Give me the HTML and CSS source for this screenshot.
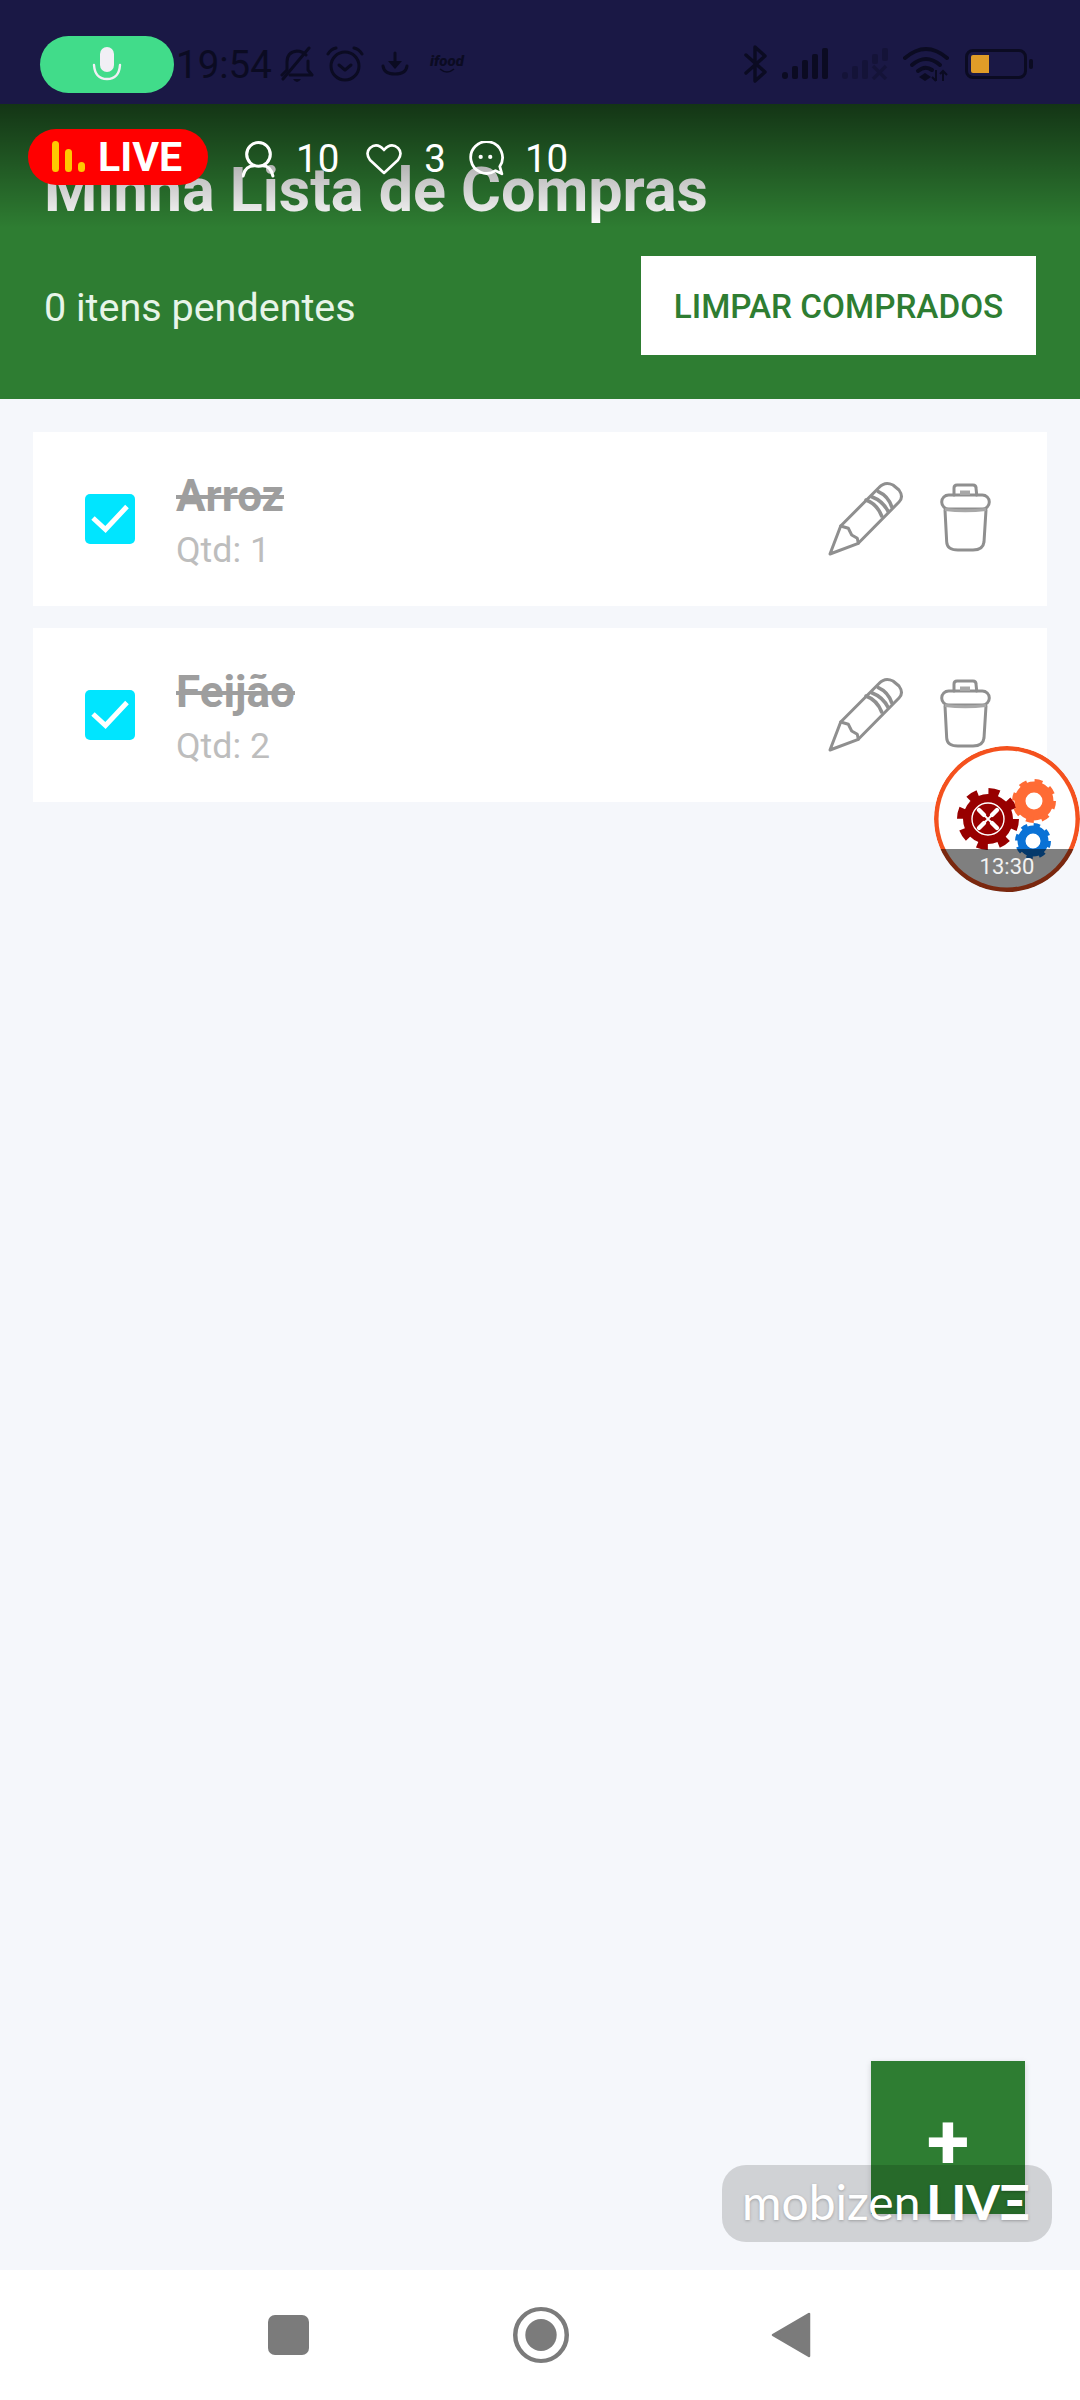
FILE: index.html
```html
<!DOCTYPE html>
<html lang="pt-BR">
<head>
<meta charset="utf-8">
<title>Minha Lista de Compras</title>
<link rel="stylesheet" href="styles.css">
</head>
<body>
<svg class="defs" width="0" height="0" aria-hidden="true">
  <defs>
    <symbol id="pencil" viewBox="0 0 80 80">
      <g fill="none" stroke="#8f8f8f" stroke-width="3" stroke-linecap="round" stroke-linejoin="round">
        <path d="M5 76 L15.7 48 L54 9.5 Q60 3 68 7 L74 12 Q79 19 74 24 L33.3 65.3 Z"/>
        <path d="M15.7 48 L23.3 50.3 L26.7 57 L32.3 60.3 L33.3 65.3"/>
        <path d="M41 22 Q52 26 56.7 38" stroke-width="3.6"/>
        <path d="M46.7 18.7 Q58 23 63.3 33.7" stroke-width="3.6"/>
        <path d="M53.3 13.7 Q63 18 66.7 28.7" stroke-width="3.6"/>
      </g>
    </symbol>
    <symbol id="trash" viewBox="0 0 56 76">
      <g fill="none" stroke="#8f8f8f" stroke-width="3" stroke-linecap="round" stroke-linejoin="round">
        <path d="M16 15 V8 Q16 5 19 5 H35 Q38 5 38 8 L38.7 15"/>
        <rect x="3.7" y="15" width="47.6" height="14" rx="7"/>
        <path d="M7 30 L8.7 62 Q9 70 20 70 H35 Q45 70 46 62 L48 30"/>
      </g>
      <rect x="22" y="10.5" width="10" height="4.5" fill="#a8a8a8"/>
      <path d="M7 29.5 Q27 32 48 29.5" fill="none" stroke="#a8a8a8" stroke-width="3"/>
    </symbol>
    <symbol id="check" viewBox="0 0 50 50">
      <path d="M8 24 L20.5 35.5 L42 12.5" fill="none" stroke="#fff" stroke-width="5"/>
    </symbol>
  </defs>
</svg>

<div class="screen">
  <div class="status">
    <div class="mic">
      <svg class="mic-icon" viewBox="0 0 30 36" width="30" height="36">
        <rect x="8" y="1" width="14" height="25" rx="7" fill="#f1eff5"/>
        <path d="M2 19 Q3 33 15 33 Q27 33 28 19" fill="none" stroke="#f1eff5" stroke-width="2.4" stroke-linecap="round"/>
      </svg>
    </div>
    <span class="clock">19:54</span>
    <svg class="st st-bell" viewBox="0 0 34 36" width="34" height="36">
      <g fill="none" stroke="#0b0b22" stroke-width="3" stroke-linecap="round" stroke-linejoin="round">
        <path d="M2 29 L7 24 V16 Q7 6 17 5 Q22 5 26 9"/>
        <path d="M28 15 V24 L32 29 H10"/>
        <path d="M3 33 L29 2"/>
      </g>
      <path d="M13 33 H21 Q19 36 17 36 Q15 36 13 33Z" fill="#0b0b22"/>
    </svg>
    <svg class="st st-alarm" viewBox="0 0 38 36" width="38" height="36">
      <g fill="none" stroke="#0b0b22" stroke-width="3" stroke-linecap="round" stroke-linejoin="round">
        <circle cx="19" cy="20" r="14"/>
        <path d="M13 19 L19 24 L25 19"/>
        <path d="M2 8 Q5 3 10 2"/>
        <path d="M36 8 Q33 3 28 2"/>
      </g>
    </svg>
    <svg class="st st-dl" viewBox="0 0 28 26" width="28" height="26">
      <g fill="none" stroke="#0b0b22" stroke-width="3" stroke-linecap="round" stroke-linejoin="round">
        <path d="M14 2 V15"/>
        <path d="M2 15 Q3 23 14 23 Q25 23 26 15"/>
      </g>
      <path d="M7 10 H21 L14 18Z" fill="#0b0b22"/>
    </svg>
    <div class="ifood">
      <span class="ifood-word">ifood</span>
      <svg class="ifood-smile" viewBox="0 0 16 6" width="16" height="6">
        <path d="M1 1 Q8 7 15 1" fill="none" stroke="#0b0b22" stroke-width="1.6"/>
      </svg>
    </div>
    <div class="status-right">
      <svg class="st-bt" viewBox="0 0 26 40" width="26" height="40">
        <path d="M3 11 L22 28 L12 37 V3 L22 12 L3 29" fill="none" stroke="#0b0b22" stroke-width="3.4" stroke-linejoin="round" stroke-linecap="round"/>
      </svg>
      <svg class="st-sig" viewBox="0 0 46 32" width="46" height="32">
        <g fill="#0b0b22">
          <rect x="0" y="24" width="6" height="7" rx="3"/>
          <rect x="10" y="18" width="6" height="13" rx="2"/>
          <rect x="20" y="12" width="6" height="19" rx="2"/>
          <rect x="30" y="6" width="6" height="25" rx="2"/>
          <rect x="40" y="0" width="6" height="31" rx="2"/>
        </g>
      </svg>
      <svg class="st-sig2" viewBox="0 0 46 32" width="46" height="32">
        <g fill="#0b0b22" opacity="0.35">
          <rect x="0" y="24" width="6" height="7" rx="3"/>
          <rect x="10" y="18" width="6" height="13" rx="2"/>
          <rect x="20" y="12" width="6" height="19" rx="2"/>
          <rect x="30" y="6" width="6" height="10" rx="2"/>
          <rect x="40" y="0" width="6" height="13" rx="2"/>
          <path d="M31 18 L44 31 M44 18 L31 31" stroke="#0b0b22" stroke-width="3.4" fill="none"/>
        </g>
      </svg>
      <svg class="st-wifi" viewBox="0 0 46 36" width="46" height="36">
        <g fill="none" stroke="#0b0b22" stroke-width="4" stroke-linecap="round">
          <path d="M2 12 Q23 -6 44 12"/>
          <path d="M9 19 Q23 7 37 19"/>
          <path d="M15 25 Q22 19 29 24"/>
        </g>
        <path d="M16 31 L22 27 L28 31 L22 35Z" fill="#0b0b22"/>
        <path d="M33 24 V35 M40 25 V35 M29 31 L33 35 M37 28 L40 25 L44 29" fill="none" stroke="#0b0b22" stroke-width="2"/>
      </svg>
      <div class="battery"><div class="battery-fill"></div></div>
      <div class="battery-nub"></div>
    </div>
  </div>

  <header class="header">
    <h1 class="title">Minha Lista de Compras</h1>
    <div class="header-row">
      <span class="pending">0 itens pendentes</span>
      <button class="clear">LIMPAR COMPRADOS</button>
    </div>
  </header>

  <main class="list">
    <div class="card">
      <div class="checkbox"><svg width="50" height="50"><use href="#check"/></svg></div>
      <div class="card-text">
        <div class="name">Arroz</div>
        <div class="qty">Qtd: 1</div>
      </div>
      <svg class="act-pencil" width="80" height="80"><use href="#pencil"/></svg>
      <svg class="act-trash" width="56" height="76"><use href="#trash"/></svg>
    </div>
    <div class="card">
      <div class="checkbox"><svg width="50" height="50"><use href="#check"/></svg></div>
      <div class="card-text">
        <div class="name">Feijão</div>
        <div class="qty">Qtd: 2</div>
      </div>
      <svg class="act-pencil" width="80" height="80"><use href="#pencil"/></svg>
      <svg class="act-trash" width="56" height="76"><use href="#trash"/></svg>
    </div>
  </main>

  <nav class="nav">
    <div class="nav-square"></div>
    <svg class="nav-home" viewBox="0 0 50 56" width="50" height="56" preserveAspectRatio="none">
      <ellipse cx="25" cy="28" rx="23" ry="26" fill="none" stroke="#7b7b7b" stroke-width="4"/>
      <ellipse cx="25" cy="28" rx="14" ry="16" fill="#7b7b7b"/>
    </svg>
    <svg class="nav-back" viewBox="0 0 40 46" width="40" height="46">
      <path d="M38 2 V44 L2 23Z" fill="#7b7b7b" stroke="#7b7b7b" stroke-width="2.5" stroke-linejoin="round"/>
    </svg>
  </nav>

  <div class="fade"></div>

  <div class="live-bar">
    <div class="live-pill">
      <svg viewBox="0 0 34 32" width="34" height="32">
        <rect x="0" y="0" width="7" height="31" rx="3.5" fill="#ffc800"/>
        <rect x="13" y="8" width="7" height="23" rx="3.5" fill="#ffc800"/>
        <rect x="26" y="21" width="7" height="10" rx="3.5" fill="#ffc800"/>
      </svg>
      <span class="live-word">LIVE</span>
    </div>
    <svg class="ls ls-user" viewBox="0 0 32 36" width="33" height="37">
      <g fill="none" stroke="#fff" stroke-width="3" stroke-linecap="round">
        <circle cx="16" cy="13" r="11.5"/>
        <path d="M1 34 Q3 24 12 24 M20 24 Q28 24 30 34"/>
      </g>
    </svg>
    <span class="ls-num ls-n1">10</span>
    <svg class="ls ls-heart" viewBox="0 0 36 32" width="36" height="32">
      <path d="M18 30 L4 17 Q-1 10 4 5 Q11 -1 18 7 Q25 -1 32 5 Q37 10 32 17Z" fill="none" stroke="#fff" stroke-width="2.6" stroke-linejoin="round"/>
    </svg>
    <span class="ls-num ls-n2">3</span>
    <svg class="ls ls-chat" viewBox="0 0 34 34" width="36" height="36">
      <path d="M26 28 A15 15 0 1 1 30 24 L32 31 Z" fill="none" stroke="#fff" stroke-width="2.6" stroke-linejoin="round"/>
      <circle cx="12" cy="15" r="2" fill="#fff"/>
      <circle cx="21" cy="15" r="2" fill="#fff"/>
    </svg>
    <span class="ls-num ls-n3">10</span>
  </div>

  <div class="bubble">
    <svg class="bubble-art" viewBox="0 0 146 146" width="146" height="146">
      <circle cx="73" cy="73" r="73" fill="#f4511e"/>
      <circle cx="73" cy="73" r="68.5" fill="#fff"/>
      <circle cx="54" cy="73" r="25" fill="#980000"/>
      <circle cx="54" cy="73" r="27" fill="none" stroke="#980000" stroke-width="8" stroke-dasharray="10.6 10.6"/>
      <circle cx="54" cy="73" r="16" fill="none" stroke="#fff" stroke-width="1.4"/>
      <path d="M45 64 L50 69 M63 64 L58 69 M50 77 L45 82 M58 77 L63 82" stroke="#fff" stroke-width="4.4" stroke-linecap="round"/>
      <path d="M50 69 L58 77 M58 69 L50 77" stroke="#fff" stroke-width="1.8"/>
      <circle cx="100" cy="55" r="14" fill="none" stroke="#ff6b35" stroke-width="11"/>
      <circle cx="100" cy="55" r="19" fill="none" stroke="#ff6b35" stroke-width="6" stroke-dasharray="7.46 7.46"/>
      <circle cx="99" cy="95" r="11.5" fill="none" stroke="#0a72d6" stroke-width="8"/>
      <circle cx="99" cy="95" r="15.5" fill="none" stroke="#0a72d6" stroke-width="5" stroke-dasharray="6.1 6.1"/>
    </svg>
    <div class="bubble-time">13:30</div>
  </div>

  <button class="fab">+</button>
  <div class="brand">
    <span class="brand-a">mobizen</span>
    <span class="brand-b">LIVΞ</span>
  </div>
</div>
</body>
</html>
```

FILE: styles.css
```css
* { box-sizing: border-box; }
html, body { margin: 0; padding: 0; }
body { font-family: Roboto, "Liberation Sans", sans-serif; background: #f5f7fb; }
.defs { position: absolute; }
.screen { position: relative; width: 1080px; height: 2400px; overflow: hidden; display: flex; flex-direction: column; }

.status { height: 104px; flex: none; background: #1a1845; padding: 24px 0 0 40px; display: flex; align-items: center; }
.mic { width: 134px; height: 57px; border-radius: 29px; background: #41dc8a; display: flex; align-items: center; justify-content: center; flex: none; }
.clock { font-size: 38.5px; color: #0b0b22; margin-left: 2px; width: 92px; flex: none; }
.st { flex: none; }
.st-bell { margin-left: 12px; }
.st-alarm { margin-left: 12px; }
.st-dl { margin-left: 17px; }
.ifood { margin-left: 21px; width: 34px; flex: none; display: flex; flex-direction: column; align-items: center; }
.ifood-word { font-size: 15px; line-height: 14px; font-weight: 900; font-style: italic; color: #0b0b22; }
.ifood-smile { display: block; }
.status-right { margin-left: auto; display: flex; align-items: center; padding-right: 47px; }
.st-sig { margin-left: 13px; }
.st-sig2 { margin-left: 14px; }
.st-wifi { margin-left: 15px; }
.battery { margin-left: 16px; width: 62px; height: 30px; border: 3.5px solid #0b0b22; border-radius: 8px; padding: 3px; }
.battery-fill { width: 18px; height: 100%; background: #e09c28; border-radius: 2px 0 0 2px; }
.battery-nub { width: 4px; height: 10px; margin-left: 2px; background: #0b0b22; border-radius: 2px; }

.header { height: 295px; flex: none; background: #2e7d32; padding: 53px 44px 44px; display: flex; flex-direction: column; justify-content: space-between; }
.title { margin: 0; font-size: 61px; line-height: 66px; font-weight: 700; color: #fff; }
.header-row { display: flex; align-items: center; justify-content: space-between; }
.pending { font-size: 39.5px; color: #e8f5e9; padding-top: 3px; }
.clear { width: 395px; height: 99px; border: 0; border-radius: 0; padding: 2px 0 0; background: #fff; color: #2e7d32; font: 500 33.3px Roboto, sans-serif; }

.list { flex: 1; padding: 33px 33px 0; display: flex; flex-direction: column; gap: 22px; background: #f5f7fb; }
.card { height: 174px; background: #fff; padding: 0 53px 0 52px; display: flex; align-items: center; }
.checkbox { width: 50px; height: 50px; background: #00e5ff; border-radius: 5px; flex: none; }
.checkbox svg { display: block; }
.card-text { flex: 1; margin-left: 41px; padding-top: 4px; }
.name { font-size: 44px; line-height: 48px; font-weight: 700; color: #9e9e9e; text-decoration: line-through; }
.qty { font-size: 35.75px; line-height: 40px; margin-top: 10px; color: #bdbdbd; }
.act-pencil { flex: none; margin-top: -2px; }
.act-trash { flex: none; margin: -2px 0 0 33px; }

.nav { height: 130px; flex: none; background: #fff; display: flex; align-items: center; padding-left: 268px; }
.nav-square { width: 41px; height: 40px; background: #7b7b7b; border-radius: 7px; }
.nav-home { margin-left: 204px; width: 56px; }
.nav-back { margin-left: 202px; }

.fade { position: absolute; left: 0; top: 104px; width: 1080px; height: 124px; background: linear-gradient(rgba(0,0,0,.58), rgba(0,0,0,0)); }

.live-bar { position: absolute; left: 28px; top: 129px; height: 56px; display: flex; align-items: center; }
.live-pill { width: 180px; height: 56px; border-radius: 28px; background: #f00; display: flex; align-items: center; padding-left: 24px; flex: none; }
.live-word { margin-left: 12px; font-size: 41px; font-weight: 700; color: #fff; line-height: 1; }
.ls { flex: none; margin-top: 4px; }
.ls-user { margin-left: 34px; }
.ls-num { font-size: 38.5px; color: #fff; margin-top: 2px; flex: none; }
.ls-n1 { margin-left: 21px; }
.ls-heart { margin-left: 27px; }
.ls-n2 { margin-left: 22px; }
.ls-chat { margin-left: 22px; }
.ls-n3 { margin-left: 21px; }

.bubble { position: absolute; left: 934px; top: 746px; width: 146px; height: 146px; border-radius: 50%; overflow: hidden; }
.bubble-art { display: block; }
.bubble-time { position: absolute; left: 0; right: 0; bottom: 0; height: 43px; background: rgba(0,0,0,.5); color: #f2f2f2; font-size: 22px; text-align: center; line-height: 36px; }

.fab { position: absolute; left: 871px; top: 2061px; width: 154px; height: 153px; padding: 8px 0 0; border: 0; border-radius: 0; background: #2e7d32; color: #fff; font: 700 78px/1 Roboto, sans-serif; box-shadow: 0 2px 6px rgba(0,0,0,.15); }
.brand { position: absolute; left: 722px; top: 2165px; width: 330px; height: 77px; border-radius: 24px; background: rgba(0,0,0,.15); display: flex; align-items: center; padding: 0 0 5px 20px; color: #fff; text-shadow: 0 1px 3px rgba(0,0,0,.25); }
.brand-a { font-family: Lato, sans-serif; font-size: 48px; font-weight: 400; }
.brand-b { font-family: Lato, sans-serif; font-size: 48px; font-weight: 900; margin-left: 6px; }
```
